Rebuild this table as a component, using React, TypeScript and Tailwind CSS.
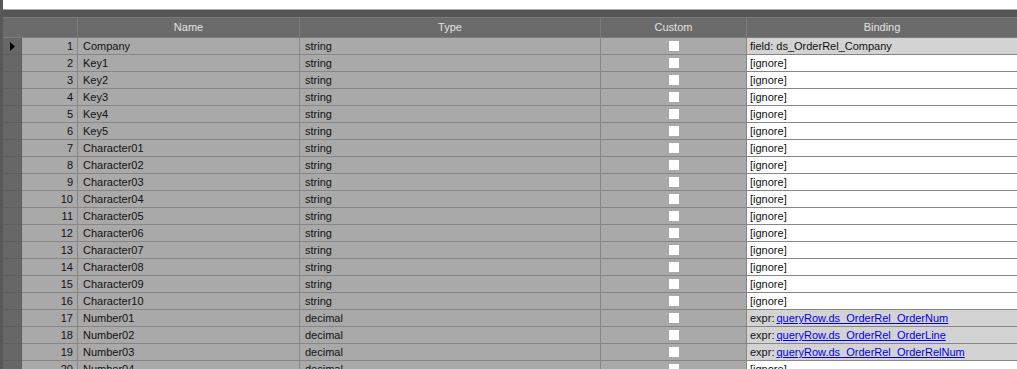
type Row = {
  name: string
  type: string
  binding: { kind: 'field' | 'ignore' | 'expr'; value?: string }
}

const rows: Row[] = [
  { name: 'Company', type: 'string', binding: { kind: 'field', value: 'ds_OrderRel_Company' } },
  ...['Key1', 'Key2', 'Key3', 'Key4', 'Key5'].map((name) => ({
    name,
    type: 'string',
    binding: { kind: 'ignore' as const },
  })),
  ...Array.from({ length: 10 }).map((_, i) => ({
    name: `Character${String(i + 1).padStart(2, '0')}`,
    type: 'string',
    binding: { kind: 'ignore' as const },
  })),
  { name: 'Number01', type: 'decimal', binding: { kind: 'expr', value: 'queryRow.ds_OrderRel_OrderNum' } },
  { name: 'Number02', type: 'decimal', binding: { kind: 'expr', value: 'queryRow.ds_OrderRel_OrderLine' } },
  { name: 'Number03', type: 'decimal', binding: { kind: 'expr', value: 'queryRow.ds_OrderRel_OrderRelNum' } },
  { name: 'Number04', type: 'decimal', binding: { kind: 'ignore' } },
  { name: 'Number05', type: 'decimal', binding: { kind: 'ignore' } },
]

const cols = 'grid grid-cols-[19px_56px_222px_301px_146px_1fr]'

function BindingCell({ binding }: { binding: Row['binding'] }) {
  if (binding.kind === 'ignore') {
    return <div className="truncate border-b border-[#868686] bg-white pl-[3px]">[ignore]</div>
  }
  if (binding.kind === 'field') {
    return (
      <div className="truncate border-b border-[#868686] bg-[#d3d3d3] pl-[3px]">field: {binding.value}</div>
    )
  }
  return (
    <div className="truncate border-b border-[#868686] bg-[#d3d3d3] pl-[3px]">
      expr:<span className="ml-[2px] text-[#0000ee] underline">{binding.value}</span>
    </div>
  )
}

export default function App() {
  return (
    <div className="h-[369px] w-[1017px] overflow-hidden bg-[#585858] pl-[3px] text-[11px] leading-[16px] text-[#111] [font-family:'Liberation_Sans',Arial,sans-serif]">
      <div className="h-[9px] bg-white" />
      <div className="h-[1px] bg-[#a8a8a8]" />
      <div className="h-[7px] bg-[#555555]" />

      <div className="grid grid-cols-[75px_222px_301px_146px_1fr] border-y border-[#7c7c7c] bg-[#6b6b6b] text-center leading-[19px] text-[#e2e2e2]">
        <div className="border-r border-[#7c7c7c]" />
        <div className="border-r border-[#7c7c7c]">Name</div>
        <div className="border-r border-[#7c7c7c]">Type</div>
        <div className="border-r border-[#7c7c7c]">Custom</div>
        <div>Binding</div>
      </div>

      {rows.map((row, i) => (
        <div key={row.name} className={cols}>
          <div className="flex items-center border-r border-b border-[#5e5e5e] bg-[#676767] pl-[7px]">
            {i === 0 && (
              <svg width="5" height="9" viewBox="0 0 5 9">
                <path d="M0 0 L5 4.5 L0 9 Z" fill="#000" />
              </svg>
            )}
          </div>
          <div className="border-r border-b border-[#868686] bg-[#a9a9a9] pr-[4px] text-right">{i + 1}</div>
          <div className="truncate border-r border-b border-[#868686] bg-[#a9a9a9] pl-[5px]">{row.name}</div>
          <div className="truncate border-r border-b border-[#868686] bg-[#a9a9a9] pl-[5px]">{row.type}</div>
          <div className="flex justify-center border-r border-b border-[#868686] bg-[#a9a9a9] pt-[3px]">
            <div className="h-[10px] w-[10px] bg-white" />
          </div>
          <BindingCell binding={row.binding} />
        </div>
      ))}
    </div>
  )
}
